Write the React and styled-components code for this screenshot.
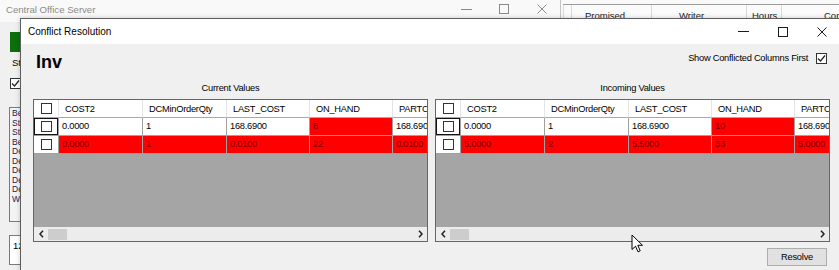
import React from "react";
import styled, { createGlobalStyle } from "styled-components";

const UI = `"Liberation Sans", Arial, sans-serif`;
const SANS = `"Liberation Sans", Arial, sans-serif`;

const GlobalStyle = createGlobalStyle`
  html, body { margin: 0; padding: 0; background: #f0f0f0; }
  body { font-family: ${SANS}; }
  *, *::before, *::after { box-sizing: border-box; }
`;

const Desktop = styled.div`
  position: relative;
  width: 839px;
  height: 270px;
  overflow: hidden;
  background: #f0f0f0;
`;

/* ---------- background window 1 ---------- */
const BackWindow = styled.div`
  position: absolute;
  left: 0;
  top: 0;
  width: 561px;
  height: 270px;
  background: #f0f0f0;
  display: flex;
  flex-direction: column;
`;
const BackTitleBar = styled.div`
  flex: none;
  height: 22px;
  background: #f9f9f9;
  display: flex;
  align-items: flex-start;
`;
const BackTitle = styled.span`
  flex: 1;
  padding: 4px 0 0 6px;
  font-family: ${SANS};
  font-size: 9.6px;
  line-height: 12px;
  color: #8a8a8a;
`;
const CaptionButtons = styled.div`
  display: flex;
  height: ${(p) => p.$h}px;
`;
const CaptionButton = styled.div`
  width: ${(p) => p.$w}px;
  height: 100%;
  display: flex;
  align-items: center;
  justify-content: center;
`;
const BackBody = styled.div`
  flex: 1;
  display: flex;
  flex-direction: column;
  align-items: flex-start;
  padding-left: 9px;
  font-family: ${UI};
  font-size: 9.5px;
  color: #000;
`;
const GreenBlock = styled.div`
  margin: 10px 0 0 1px;
  width: 40px;
  height: 20px;
  background: #0b700b;
`;
const BackLabel = styled.div`
  margin: 5px 0 0 3px;
  line-height: 12px;
`;
const BackCheck = styled.div`
  margin: 9px 0 0 1px;
`;
const ListBox = styled.div`
  margin-top: 18px;
  width: 60px;
  height: 115px;
  border: 1px solid #7a7a7a;
  background: #f4f4f4;
  padding: 1px 2px;
  font-size: 8.5px;
  line-height: 9.5px;
  color: #1a1a5a;
`;
const TextBox = styled.div`
  margin-top: 13px;
  width: 60px;
  height: 30px;
  border: 1px solid #7a7a7a;
  background: #fff;
  padding: 4px 3px;
`;

/* ---------- background window 2 ---------- */
const BackWindow2 = styled.div`
  position: absolute;
  left: 560px;
  top: 0;
  width: 300px;
  height: 30px;
  background: #f9f9f9;
  border-left: 1px solid #c4c4c4;
  padding-top: 4px;
`;
const BackHeader = styled.div`
  display: flex;
  border-top: 1px solid #9c9c9c;
  margin-left: 2px;
  height: 20px;
  background: #fbfbfb;
`;
const BackHeaderCell = styled.div`
  width: ${(p) => p.$w}px;
  flex: none;
  padding: 5px 0 0 ${(p) => p.$pad}px;
  border-left: 1px solid #dadada;
  font-family: ${UI};
  font-size: 9.5px;
  line-height: 12px;
  color: #222;
  white-space: nowrap;
  overflow: hidden;
`;

/* ---------- dialog ---------- */
const Dialog = styled.div`
  position: absolute;
  left: 20px;
  top: 18px;
  width: 822px;
  height: 262px;
  border: 1px solid #5e5e5e;
  background: #f0f0f0;
  display: flex;
  flex-direction: column;
  box-shadow: 0 0 5px rgba(0, 0, 0, 0.2);
`;
const TitleBar = styled.div`
  flex: none;
  height: 25px;
  background: #fff;
  display: flex;
  align-items: center;
`;
const TitleText = styled.span`
  flex: 1;
  padding-left: 7px;
  font-family: ${SANS};
  font-size: 10px;
  color: #000;
`;
const Body = styled.div`
  flex: 1;
  display: flex;
  flex-direction: column;
  padding: 0 11px 0 12px;
  font-family: ${UI};
  font-size: 9.3px;
  letter-spacing: -0.25px;
  color: #000;
`;
const TopRow = styled.div`
  flex: none;
  height: 37px;
  display: flex;
  justify-content: space-between;
  align-items: flex-start;
`;
const TableName = styled.h1`
  margin: 8px 0 0 3px;
  font-family: ${SANS};
  font-size: 18px;
  font-weight: bold;
  letter-spacing: 0;
  line-height: 20px;
`;
const ShowToggle = styled.label`
  margin: 8px 3px 0 0;
  display: flex;
  align-items: center;
  gap: 8px;
  line-height: 12px;
`;
const Box = styled.span`
  flex: none;
  width: ${(p) => p.$size}px;
  height: ${(p) => p.$size}px;
  border: 1px solid #333;
  background: #fff;
  display: flex;
  align-items: center;
  justify-content: center;
`;

const Panels = styled.div`
  flex: none;
  display: grid;
  grid-template-columns: 1fr 1fr;
  column-gap: 7px;
`;
const Panel = styled.section`
  display: flex;
  flex-direction: column;
  min-width: 0;
`;
const PanelLabel = styled.div`
  height: 18px;
  line-height: 14px;
  text-align: center;
`;
const Grid = styled.div`
  height: 143px;
  border: 1px solid #666;
  background: #a5a5a5;
  display: flex;
  flex-direction: column;
  overflow: hidden;
`;
const Row = styled.div`
  flex: none;
  height: 18px;
  display: grid;
  grid-template-columns: 25px 84px 84px 83px 83px 84px;
`;
const HeadCell = styled.div`
  background: #fff;
  border-right: 1px solid #e4e4e4;
  border-bottom: 1px solid #a8a8a8;
  padding-left: ${(p) => (p.$center ? 0 : 6)}px;
  white-space: nowrap;
  overflow: hidden;
  display: flex;
  align-items: center;
  justify-content: ${(p) => (p.$center ? "center" : "flex-start")};
`;
const Cell = styled.div`
  background: ${(p) => (p.$conflict ? "#ff0000" : "#fff")};
  color: ${(p) => (p.$conflict ? "#7a0000" : "#000")};
  border-right: 1px solid #a0a0a0;
  border-bottom: 1px solid #a0a0a0;
  padding-left: 3px;
  line-height: 17px;
  white-space: nowrap;
  overflow: hidden;
`;
const CheckCell = styled.div`
  background: #fff;
  border-right: 1px solid #a0a0a0;
  border-bottom: 1px solid #a0a0a0;
  display: flex;
  align-items: center;
  justify-content: center;
  box-shadow: ${(p) => (p.$focus ? "inset 0 0 0 1px #111" : "none")};
`;
const EmptyArea = styled.div`
  flex: 1;
`;
const HScroll = styled.div`
  flex: none;
  height: 14px;
  background: #ececec;
  display: flex;
  align-items: center;
`;
const ScrollArrow = styled.div`
  width: 14px;
  height: 14px;
  flex: none;
  display: flex;
  align-items: center;
  justify-content: center;
`;
const Thumb = styled.div`
  width: 19px;
  height: 11px;
  background: #cdcdcd;
  flex: none;
`;
const Track = styled.div`
  flex: 1;
`;
const Footer = styled.div`
  flex: none;
  display: flex;
  justify-content: flex-end;
  padding: 6px 3px 0 0;
`;
const Button = styled.button`
  width: 60px;
  height: 18px;
  padding: 0;
  border: 1px solid #adadad;
  background: #e1e1e1;
  font-family: ${UI};
  font-size: 9.3px;
  letter-spacing: -0.2px;
  color: #000;
`;
const Cursor = styled.svg`
  position: absolute;
  left: 631px;
  top: 234px;
`;

/* ---------- icons ---------- */
const Minimize = ({ c }) => (
  <svg width="11" height="11" viewBox="0 0 11 11">
    <path d="M0 5.5H11" stroke={c} strokeWidth="1" />
  </svg>
);
const Maximize = ({ c }) => (
  <svg width="10" height="10" viewBox="0 0 10 10">
    <rect x="0.5" y="0.5" width="9" height="9" fill="none" stroke={c} strokeWidth="1" />
  </svg>
);
const Close = ({ c }) => (
  <svg width="10" height="10" viewBox="0 0 10 10">
    <path d="M0.5 0.5L9.5 9.5M9.5 0.5L0.5 9.5" stroke={c} strokeWidth="1" />
  </svg>
);
const Tick = () => (
  <svg width="9" height="9" viewBox="0 0 9 9">
    <path d="M1 4.5L3.5 7L8 1.5" fill="none" stroke="#222" strokeWidth="1.2" />
  </svg>
);
const Chevron = ({ dir }) => (
  <svg width="5" height="8" viewBox="0 0 5 8">
    <path
      d={dir === "left" ? "M4 0.8L1 4L4 7.2" : "M1 0.8L4 4L1 7.2"}
      fill="none"
      stroke="#222"
      strokeWidth="1.5"
    />
  </svg>
);

const Checkbox = ({ size = 11, checked }) => (
  <Box $size={size}>{checked && <Tick />}</Box>
);

const Caption = ({ w, h, color }) => (
  <CaptionButtons $h={h}>
    <CaptionButton $w={w}>
      <Minimize c={color} />
    </CaptionButton>
    <CaptionButton $w={w}>
      <Maximize c={color} />
    </CaptionButton>
    <CaptionButton $w={w}>
      <Close c={color} />
    </CaptionButton>
  </CaptionButtons>
);

/* ---------- data ---------- */
const columns = ["COST2", "DCMinOrderQty", "LAST_COST", "ON_HAND", "PARTCOST"];
const panels = [
  {
    label: "Current Values",
    rows: [
      { cells: ["0.0000", "1", "168.6900", "8", "168.6900"], conflict: [0, 0, 0, 1, 0], focus: true },
      { cells: ["0.0000", "1", "0.0100", "22", "0.0100"], conflict: [1, 1, 1, 1, 1] },
    ],
  },
  {
    label: "Incoming Values",
    rows: [
      { cells: ["0.0000", "1", "168.6900", "10", "168.6900"], conflict: [0, 0, 0, 1, 0], focus: true },
      { cells: ["5.0000", "2", "5.5000", "33", "5.0000"], conflict: [1, 1, 1, 1, 1] },
    ],
  },
];
const listItems = ["Be", "St", "St", "Be", "De", "De", "De", "De", "De", "Wi"];

const ValuesGrid = ({ rows }) => (
  <Grid>
    <Row>
      <HeadCell $center>
        <Checkbox />
      </HeadCell>
      {columns.map((c) => (
        <HeadCell key={c}>{c}</HeadCell>
      ))}
    </Row>
    {rows.map((r, i) => (
      <Row key={i}>
        <CheckCell $focus={r.focus}>
          <Checkbox />
        </CheckCell>
        {r.cells.map((v, j) => (
          <Cell key={j} $conflict={!!r.conflict[j]}>
            {v}
          </Cell>
        ))}
      </Row>
    ))}
    <EmptyArea />
    <HScroll>
      <ScrollArrow>
        <Chevron dir="left" />
      </ScrollArrow>
      <Thumb />
      <Track />
      <ScrollArrow>
        <Chevron dir="right" />
      </ScrollArrow>
    </HScroll>
  </Grid>
);

export default function App() {
  return (
    <>
      <GlobalStyle />
      <Desktop>
        <BackWindow>
          <BackTitleBar>
            <BackTitle>Central Office Server</BackTitle>
            <Caption w={38} h={18} color="#8a8a8a" />
          </BackTitleBar>
          <BackBody>
            <GreenBlock />
            <BackLabel>St</BackLabel>
            <BackCheck>
              <Checkbox size={11} checked />
            </BackCheck>
            <ListBox>
              {listItems.map((t, i) => (
                <div key={i}>{t}</div>
              ))}
            </ListBox>
            <TextBox>12</TextBox>
          </BackBody>
        </BackWindow>

        <BackWindow2>
          <BackHeader>
            <BackHeaderCell $w={8} $pad={0} />
            <BackHeaderCell $w={80} $pad={13}>Promised</BackHeaderCell>
            <BackHeaderCell $w={95} $pad={27}>Writer</BackHeaderCell>
            <BackHeaderCell $w={35} $pad={5}>Hours</BackHeaderCell>
            <BackHeaderCell $w={80} $pad={42}>Com</BackHeaderCell>
          </BackHeader>
        </BackWindow2>

        <Dialog>
          <TitleBar>
            <TitleText>Conflict Resolution</TitleText>
            <Caption w={39} h={25} color="#1a1a1a" />
          </TitleBar>
          <Body>
            <TopRow>
              <TableName>Inv</TableName>
              <ShowToggle>
                Show Conflicted Columns First
                <Checkbox size={11} checked />
              </ShowToggle>
            </TopRow>
            <Panels>
              {panels.map((p) => (
                <Panel key={p.label}>
                  <PanelLabel>{p.label}</PanelLabel>
                  <ValuesGrid rows={p.rows} />
                </Panel>
              ))}
            </Panels>
            <Footer>
              <Button>Resolve</Button>
            </Footer>
          </Body>
        </Dialog>

        <Cursor width="13" height="19" viewBox="0 0 13 19">
          <path
            d="M1 1V15.5L4.5 12.2L7 17.8L9.2 16.8L6.8 11.3H11.5Z"
            fill="#fff"
            stroke="#000"
            strokeWidth="1"
            strokeLinejoin="round"
          />
        </Cursor>
      </Desktop>
    </>
  );
}
